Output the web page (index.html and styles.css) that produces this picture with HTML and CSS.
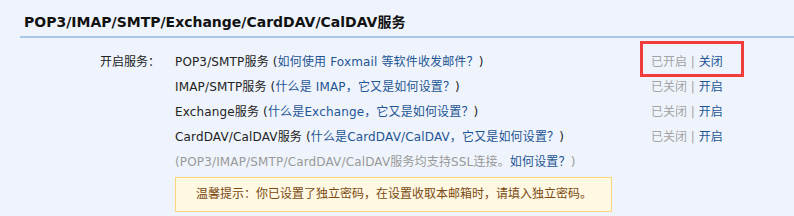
FILE: index.html
```html
<!DOCTYPE html>
<html lang="zh-CN">
<head>
    <meta charset="UTF-8">
    <title>账户设置</title>
    <link rel="stylesheet" href="styles.css">
</head>
<body>

    <div class="panel">
        <h2 class="panel-title">POP3/IMAP/SMTP/Exchange/CardDAV/CalDAV服务</h2>

        <div class="settings">
            <div class="label">开启服务：</div>
            <div class="services">
                <div class="row">
                    <div class="name">POP3/SMTP服务 (<a href="#">如何使用 Foxmail 等软件收发邮件？</a>)</div>
                    <div class="status">
                        <span class="mark"></span>
                        <span class="state">已开启</span> <span class="sep">|</span> <a href="#">关闭</a>
                    </div>
                </div>
                <div class="row">
                    <div class="name">IMAP/SMTP服务 (<a href="#">什么是 IMAP，它又是如何设置？</a>)</div>
                    <div class="status">
                        <span class="state">已关闭</span> <span class="sep">|</span> <a href="#">开启</a>
                    </div>
                </div>
                <div class="row">
                    <div class="name">Exchange服务 (<a href="#">什么是Exchange，它又是如何设置？</a>)</div>
                    <div class="status">
                        <span class="state">已关闭</span> <span class="sep">|</span> <a href="#">开启</a>
                    </div>
                </div>
                <div class="row">
                    <div class="name">CardDAV/CalDAV服务 (<a href="#">什么是CardDAV/CalDAV，它又是如何设置？</a>)</div>
                    <div class="status">
                        <span class="state">已关闭</span> <span class="sep">|</span> <a href="#">开启</a>
                    </div>
                </div>
                <div class="row note">(POP3/IMAP/SMTP/CardDAV/CalDAV服务均支持SSL连接。<a href="#">如何设置？</a>)</div>

                <div class="tip">温馨提示：你已设置了独立密码，在设置收取本邮箱时，请填入独立密码。</div>
            </div>
        </div>
    </div>

</body>
</html>
```

FILE: styles.css
```css
* {
    margin: 0;
    padding: 0;
    box-sizing: border-box;
}

body {
    background: #eff4fc;
    color: #222;
    font-family: "DejaVu Sans", "Noto Sans CJK SC", sans-serif;
    font-size: 12px;
}

a {
    color: #1e5494;
    text-decoration: none;
}

.panel {
    padding-left: 20px;
}

/* Title */
.panel-title {
    margin-top: 12px;
    padding: 0 0 4px 4px;
    font-size: 14px;
    line-height: 20px;
    font-weight: bold;
    color: #111;
    border-bottom: 2px solid #a8c6e8;
}

/* Settings */
.settings {
    display: flex;
    margin-top: 12px;
}

.label {
    width: 155px;
    padding-left: 80px;
    line-height: 25px;
    white-space: nowrap;
}

.services {
    flex: 1;
}

.row {
    display: flex;
    height: 25px;
    line-height: 25px;
    letter-spacing: 0.15px;
    white-space: nowrap;
}

.name {
    width: 476px;
}

.status {
    position: relative;
    letter-spacing: 0;
}

.state,
.sep {
    color: #a3a3a3;
}

/* red annotation round the first switch */
.mark {
    position: absolute;
    left: -11px;
    top: -9px;
    width: 104px;
    height: 36px;
    border: 3px solid #f23b3b;
}

.note {
    color: #999;
}

.tip {
    width: 437px;
    margin-top: 2px;
    padding-left: 20px;
    height: 35px;
    line-height: 33px;
    background: #fff8e2;
    border: 1px solid #fcd57a;
    color: #7b4a12;
}
```
